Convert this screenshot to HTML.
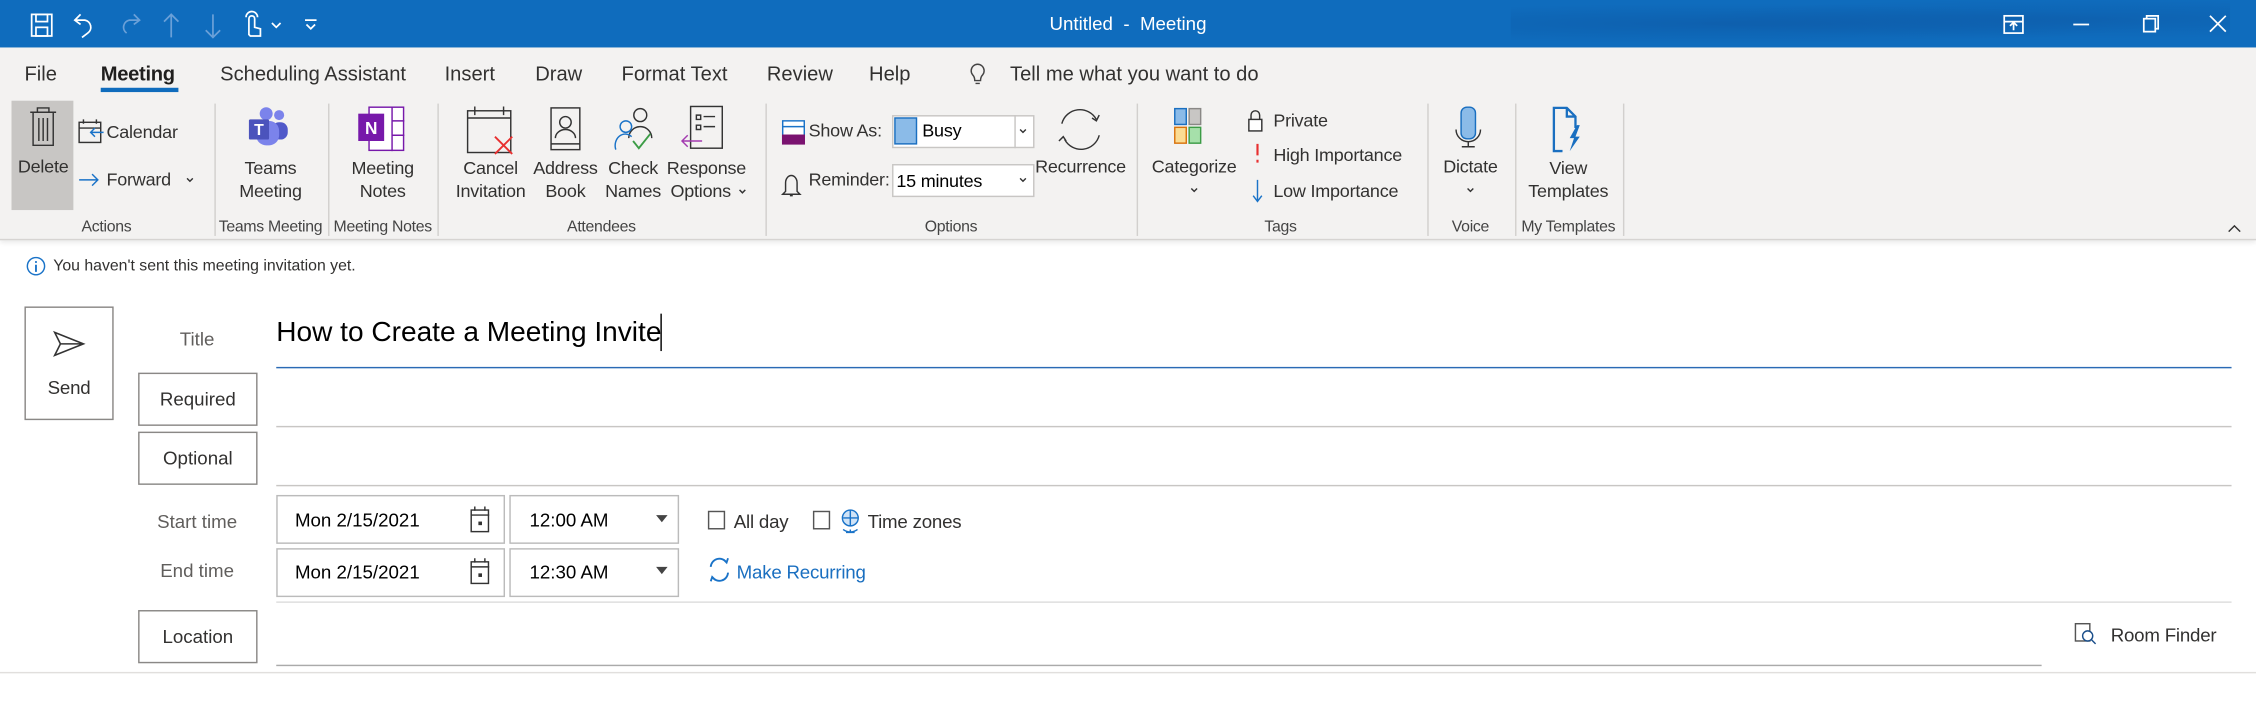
<!DOCTYPE html>
<html><head><meta charset="utf-8">
<style>
html,body{margin:0;padding:0;background:#fff;overflow:hidden;width:2256px;height:703px}
#w{position:absolute;left:0;top:0;width:1568px;height:489px;transform:scale(1.43878);transform-origin:0 0;font-family:"Liberation Sans",sans-serif;color:#323130}
.a{position:absolute;white-space:nowrap}
.c{transform:translateX(-50%);text-align:center}
.t{font-size:12.5px;color:#323130;letter-spacing:-.15px}
.gl{font-size:11px;color:#444;letter-spacing:-.2px}
.sep{position:absolute;top:72px;width:1px;height:92px;background:#d2d0ce}
.btn{position:absolute;border:1px solid #8a8886;background:#fff;font-size:13px;display:flex;align-items:center;justify-content:center;box-sizing:border-box;color:#323130}
.hl{position:absolute;height:1px;background:#c8c6c4}
.box{position:absolute;border:1px solid #c8c6c4;box-sizing:border-box;background:#fff;font-size:13px;color:#000}
svg{position:absolute;overflow:visible}
</style></head><body><div id="w">
<div class="a" style="left:0;top:0;width:1568px;height:33px;background:#0f6cbd"></div>
<div class="a" style="left:1050px;top:0;width:500px;height:33px;background:radial-gradient(ellipse at 30% 50%,rgba(10,60,130,.25),transparent 60%),radial-gradient(ellipse at 80% 40%,rgba(10,60,130,.2),transparent 50%)"></div>
<div class="a c" style="left:784px;top:9px;color:#fff;font-size:13px">Untitled &nbsp;-&nbsp; Meeting</div>
<svg style="left:0;top:0" width="1568" height="33" fill="none" stroke="#fff" stroke-width="1.2">
<rect x="22" y="10" width="14" height="15"/><rect x="25" y="10" width="8" height="5"/><rect x="25" y="19" width="8" height="6"/>
<path d="M56 10 L52 14 L56 17 M52 14 H59 A5 5 0 0 1 61 23 L57 26"/>
<path stroke="#6aa0d8" d="M93 10 L97 14 L93 17 M97 14 H90 A5 5 0 0 0 88 23"/>
<path stroke="#6aa0d8" d="M119 26 V10 M114 15 L119 10 L124 15"/>
<path stroke="#6aa0d8" d="M148 10 V26 M143 21 L148 26 L153 21"/>
<path d="M173 24 V13 a2 2 0 0 1 4 0 V19 l4 1 v5 h-7z M171 12 a4 4 0 0 1 8 0"/>
<path d="M189 16 l3 3 l3 -3"/><path d="M212 14 h8 M213 17 l3 3 l3 -3"/>
<rect x="1393" y="11" width="13" height="12"/><path d="M1393 15 h13 M1399.5 21 v-5 M1397 18 l2.5-2.5 l2.5 2.5"/>
<path d="M1441 17 h11"/>
<rect x="1490" y="13" width="8" height="9"/><path d="M1492 13 v-2 h8 v9 h-2"/>
<path d="M1536 11 l11 11 M1547 11 l-11 11"/>
</svg>
<div class="a" style="left:0;top:33px;width:1568px;height:133px;background:#f3f2f1;border-bottom:1px solid #d6d4d2;box-shadow:0 2px 3px rgba(0,0,0,.08)"></div>
<div class="a" style="top:43px;left:0;font-size:14px;color:#323130">
<span class="a" style="left:17px">File</span>
<span class="a" style="left:70px;color:#201f1e;font-weight:bold;letter-spacing:-.2px">Meeting</span>
<span class="a" style="left:153px">Scheduling Assistant</span>
<span class="a" style="left:309px">Insert</span>
<span class="a" style="left:372px">Draw</span>
<span class="a" style="left:432px">Format Text</span>
<span class="a" style="left:533px">Review</span>
<span class="a" style="left:604px">Help</span>
<span class="a" style="left:702px">Tell me what you want to do</span>
</div>
<div class="a" style="left:70px;top:61px;width:54px;height:3px;background:#0f6cbd"></div>
<svg style="left:0;top:0" width="1568" height="200" fill="none" stroke="#444" stroke-width="1">
<path d="M676 52 a4.5 4.5 0 1 1 7 0 c-1 1 -1.5 2 -1.5 4 h-4 c0-2 -.5-3 -1.5-4z M678 58 h3"/>
</svg>
<div class="a" style="left:8px;top:70px;width:43px;height:76px;background:#c8c6c4"></div>
<svg style="left:0;top:0" width="1568" height="170" fill="none" stroke="#333" stroke-width="1">
<path d="M21 78 h18 M26 78 v-3 h8 v3 M23 78 v23 h14 v-23 M27 82 v16 M30 82 v16 M33 82 v16"/>
<rect x="55" y="85" width="15" height="14"/><path d="M55 89 h15 M58 83 v3 M67 83 v3"/>
<path stroke="#1a73c8" d="M72 92 h-9 M66 89 l-3 3 l3 3"/>
<path stroke="#1a73c8" d="M55 125 h13 M64 121 l4 4 l-4 4"/>
<path d="M130 124 l2 2 l2 -2"/>
<rect x="325" y="77" width="30" height="29"/><path d="M325 82 h30 M330 74 v6 M350 74 v6"/>
<path stroke="#e83030" stroke-width="1.3" d="M344 95 l12 12 M356 95 l-12 12"/>
<rect x="383" y="75" width="20" height="29"/><path d="M383 100 h20"/><circle cx="393" cy="85" r="4"/><path d="M386 96 a7 6 0 0 1 14 0"/>
<circle cx="445" cy="80" r="4.5"/><path d="M437 96 a8 8 0 0 1 16 0"/>
<circle stroke="#1a73c8" cx="435" cy="88" r="4"/><path stroke="#1a73c8" d="M428 104 a7 8 0 0 1 11 -9"/>
<path stroke="#3c9c46" stroke-width="1.3" d="M440 98 l4 5 l8 -10"/>
<rect x="480" y="74" width="22" height="29"/><path d="M484 80 h3 v3 h-3z M484 87 h3 v3 h-3z M489 81 h8 M489 88 h8"/>
<path stroke="#a33ab0" d="M474 98 h14 M478 94 l-4 4 l4 4"/>
<path d="M514 132 l2 2 l2 -2"/>
<rect x="544" y="84" width="15" height="15" fill="#fff" stroke="#1a73c8"/><path stroke="#1a73c8" d="M544 88 h15"/><rect x="544" y="94" width="15" height="6" fill="#7a1370" stroke="#7a1370"/>
<path d="M546 127 a4 5 0 0 1 8 0 v6 l2 2 h-12 l2 -2z M549 136 h2"/>
<rect x="620.5" y="80.5" width="98" height="22" fill="#fff" stroke="#c8c6c4"/><path stroke="#c8c6c4" d="M705.5 80 v23"/>
<rect x="622" y="82" width="15" height="18" fill="#8bbbe8" stroke="#1a6fc0"/>
<path d="M709 90 l2 2 l2 -2"/>
<rect x="620.5" y="114.5" width="98" height="22" fill="#fff" stroke="#c8c6c4"/>
<path d="M709 124 l2 2 l2 -2"/>
<path d="M738 86 a13 13 0 0 1 24 -3 M764 94 a13 13 0 0 1 -24 3"/><path d="M759 82 l3 2 l2 -4 M741 98 l-2 -3 l-3 3"/>
<rect x="816.5" y="75.5" width="8" height="11" fill="#8bbbe8" stroke="#1a6fc0"/><rect x="826.5" y="75.5" width="8" height="11" fill="#c8c6c4" stroke="#8a8886"/>
<rect x="816.5" y="88.5" width="8" height="11" fill="#fbdc93" stroke="#d8730c"/><rect x="826.5" y="88.5" width="8" height="11" fill="#a6e0aa" stroke="#3c9c46"/>
<path d="M828 131 l2 2 l2 -2"/>
<rect x="868" y="83" width="9" height="8" fill="#fff"/><path d="M869.5 83 v-3 a3 3 0 0 1 6 0 v3"/>
<path stroke="#e83030" stroke-width="1.5" d="M874 100 v8 M874 111 v2"/>
<path stroke="#1a73c8" d="M874 125 v15 M871 136 l3 4 l3 -4"/>
<rect x="1015.5" y="74.5" width="10" height="22" rx="4" fill="#8bbbe8" stroke="#1a6fc0"/><path d="M1012 90 a8 8 0 0 0 17 0 M1020.5 98 v4 M1016 102 h9"/>
<path d="M1020 131 l2 2 l2 -2"/>
<path stroke="#1a6fc0" stroke-width="1.6" d="M1086 105 h-6 v-30 h9 l6 6 v8 M1089 75 v6 h6"/>
<path fill="#1a6fc0" stroke="none" d="M1096 87 l-5 9 h3 l-3 9 l7 -10 h-3 l3 -8z"/>
<path d="M1549 161 l4 -4 l4 4"/>
</svg>
<svg style="left:172px;top:74px" width="32" height="32">
<circle cx="22" cy="6" r="3.5" fill="#7b83eb"/><rect x="17" y="11" width="11" height="12" rx="5" fill="#5059c9"/>
<circle cx="13" cy="5" r="4.5" fill="#7b83eb"/><rect x="6" y="10" width="16" height="17" rx="7" fill="#7b83eb"/>
<rect x="1" y="9" width="14" height="14" rx="1" fill="#4b53bc"/><text x="8" y="20" font-size="11" font-weight="bold" fill="#fff" text-anchor="middle" font-family="Liberation Sans">T</text>
</svg>
<svg style="left:248px;top:74px" width="36" height="32">
<rect x="8.5" y="0.5" width="24" height="30" fill="#fff" stroke="#7719aa"/><path d="M24.5 0 v31 M25 10 h8 M25 20 h8" stroke="#7719aa"/>
<rect x="1" y="5" width="18" height="19" fill="#7719aa"/><text x="10" y="19" font-size="12" font-weight="bold" fill="#fff" text-anchor="middle" font-family="Liberation Sans">N</text>
</svg>
<div class="sep" style="left:149px"></div><div class="sep" style="left:228px"></div><div class="sep" style="left:304px"></div><div class="sep" style="left:532px"></div><div class="sep" style="left:790px"></div><div class="sep" style="left:992px"></div><div class="sep" style="left:1053px"></div><div class="sep" style="left:1128px"></div>
<div class="a t c" style="left:30px;top:109px">Delete</div>
<div class="a t" style="left:74px;top:85px">Calendar</div>
<div class="a t" style="left:74px;top:118px">Forward</div>
<div class="a t c" style="left:188px;top:109px;line-height:16px">Teams<br>Meeting</div>
<div class="a t c" style="left:266px;top:109px;line-height:16px">Meeting<br>Notes</div>
<div class="a t c" style="left:341px;top:109px;line-height:16px">Cancel<br>Invitation</div>
<div class="a t c" style="left:393px;top:109px;line-height:16px">Address<br>Book</div>
<div class="a t c" style="left:440px;top:109px;line-height:16px">Check<br>Names</div>
<div class="a t c" style="left:491px;top:109px;line-height:16px">Response<br><span style="margin-left:-8px">Options</span></div>
<div class="a t" style="left:562px;top:84px">Show As:</div>
<div class="a t" style="left:641px;top:84px;color:#000">Busy</div>
<div class="a t" style="left:562px;top:118px">Reminder:</div>
<div class="a t" style="left:623px;top:119px;color:#000">15 minutes</div>
<div class="a t c" style="left:751px;top:109px">Recurrence</div>
<div class="a t c" style="left:830px;top:109px">Categorize</div>
<div class="a t" style="left:885px;top:77px">Private</div>
<div class="a t" style="left:885px;top:101px">High Importance</div>
<div class="a t" style="left:885px;top:126px">Low Importance</div>
<div class="a t c" style="left:1022px;top:109px">Dictate</div>
<div class="a t c" style="left:1090px;top:109px;line-height:16px">View<br>Templates</div>
<div class="a gl c" style="left:74px;top:152px">Actions</div>
<div class="a gl c" style="left:188px;top:152px">Teams Meeting</div>
<div class="a gl c" style="left:266px;top:152px">Meeting Notes</div>
<div class="a gl c" style="left:418px;top:152px">Attendees</div>
<div class="a gl c" style="left:661px;top:152px">Options</div>
<div class="a gl c" style="left:890px;top:152px">Tags</div>
<div class="a gl c" style="left:1022px;top:152px">Voice</div>
<div class="a gl c" style="left:1090px;top:152px">My Templates</div>
<svg style="left:18px;top:178px" width="14" height="14" fill="none" stroke="#1a73c8"><circle cx="7" cy="7" r="6"/><path d="M7 6 v5 M7 3.5 v1.2" stroke-width="1.3"/></svg>
<div class="a" style="left:37px;top:179px;font-size:11px;color:#323130">You haven't sent this meeting invitation yet.</div>
<div class="btn" style="left:17px;top:213px;width:62px;height:79px"></div>
<svg style="left:36px;top:229px" width="24" height="22" fill="none" stroke="#333" stroke-width="1.1"><path d="M2 2 L22 10 L2 18 L6 10 Z M6 10 H22"/></svg>
<div class="a t c" style="left:48px;top:262px;font-size:13px">Send</div>
<div class="a c" style="left:137px;top:228px;font-size:13px;color:#605e5c">Title</div>
<div class="a" style="left:192px;top:220px;font-size:19.5px;color:#000">How to Create a Meeting Invite</div>
<div class="a" style="left:459px;top:218px;width:1px;height:26px;background:#000"></div>
<div class="a" style="left:192px;top:255px;width:1359px;height:1px;background:#2a6ab5"></div>
<div class="btn" style="left:96px;top:259px;width:83px;height:37px">Required</div>
<div class="hl" style="left:192px;top:296px;width:1359px"></div>
<div class="btn" style="left:96px;top:300px;width:83px;height:37px">Optional</div>
<div class="hl" style="left:192px;top:337px;width:1359px"></div>
<div class="a c" style="left:137px;top:355px;font-size:13px;color:#605e5c">Start time</div>
<div class="a c" style="left:137px;top:389px;font-size:13px;color:#605e5c">End time</div>
<div class="box" style="left:192px;top:344px;width:159px;height:34px;border-color:#bbb"><span class="a" style="left:12px;top:9px">Mon 2/15/2021</span></div>
<div class="box" style="left:354px;top:344px;width:118px;height:34px;border-color:#bbb"><span class="a" style="left:13px;top:9px">12:00 AM</span></div>
<div class="box" style="left:192px;top:381px;width:159px;height:34px;border-color:#bbb"><span class="a" style="left:12px;top:8px">Mon 2/15/2021</span></div>
<div class="box" style="left:354px;top:381px;width:118px;height:34px;border-color:#bbb"><span class="a" style="left:13px;top:8px">12:30 AM</span></div>
<svg style="left:0;top:0" width="1568" height="489" fill="none" stroke="#333" stroke-width="1">
<rect x="327.5" y="354.5" width="12" height="15"/><path d="M327 358 h13 M330 352 v3 M337 352 v3"/><rect x="333" y="363" width="1.5" height="1.5" fill="#333"/>
<rect x="327.5" y="390.5" width="12" height="15"/><path d="M327 394 h13 M330 388 v3 M337 388 v3"/><rect x="333" y="399" width="1.5" height="1.5" fill="#333"/>
<path fill="#444" stroke="none" d="M456 358 h8 l-4 5z M456 394 h8 l-4 5z"/>
<rect x="492.5" y="355.5" width="11" height="12" stroke="#555"/>
<rect x="565.5" y="355.5" width="11" height="12" stroke="#555"/>
<circle cx="591" cy="360" r="5.5" stroke="#1a73c8" fill="#cfe3f7"/><path stroke="#1a73c8" d="M586 360 h10 M591 354.5 v11 M586 368 a8 8 0 0 0 10 0 M591 368 v2 M588 370 h6"/>
<path stroke="#1a73c8" stroke-width="1.3" d="M494 394 a6 6 0 0 1 11 -3 M506 398 a6 6 0 0 1 -11 3 M503 389 l2 2 l1 -3 M497 403 l-2 -2 l-1 3"/>
<rect x="1442.5" y="433.5" width="10" height="12" stroke="#555"/><circle cx="1451" cy="442" r="3.5" fill="#fff" stroke="#1a4e8a"/><path stroke="#1a4e8a" d="M1453.5 444.5 l3 3"/>
</svg>
<div class="a t" style="left:510px;top:355px;font-size:13px">All day</div>
<div class="a t" style="left:603px;top:355px;font-size:13px">Time zones</div>
<div class="a t" style="left:512px;top:390px;color:#1a6fc0;font-size:13px">Make Recurring</div>
<div class="hl" style="left:192px;top:418px;width:1359px;background:#ddd"></div>
<div class="btn" style="left:96px;top:424px;width:83px;height:37px">Location</div>
<div class="hl" style="left:192px;top:462px;width:1227px;background:#aaa"></div>
<div class="a t" style="left:1467px;top:434px;font-size:13px">Room Finder</div>
<div class="a" style="left:0;top:467px;width:1568px;height:1px;background:#e1dfdd"></div>
</div></body></html>
